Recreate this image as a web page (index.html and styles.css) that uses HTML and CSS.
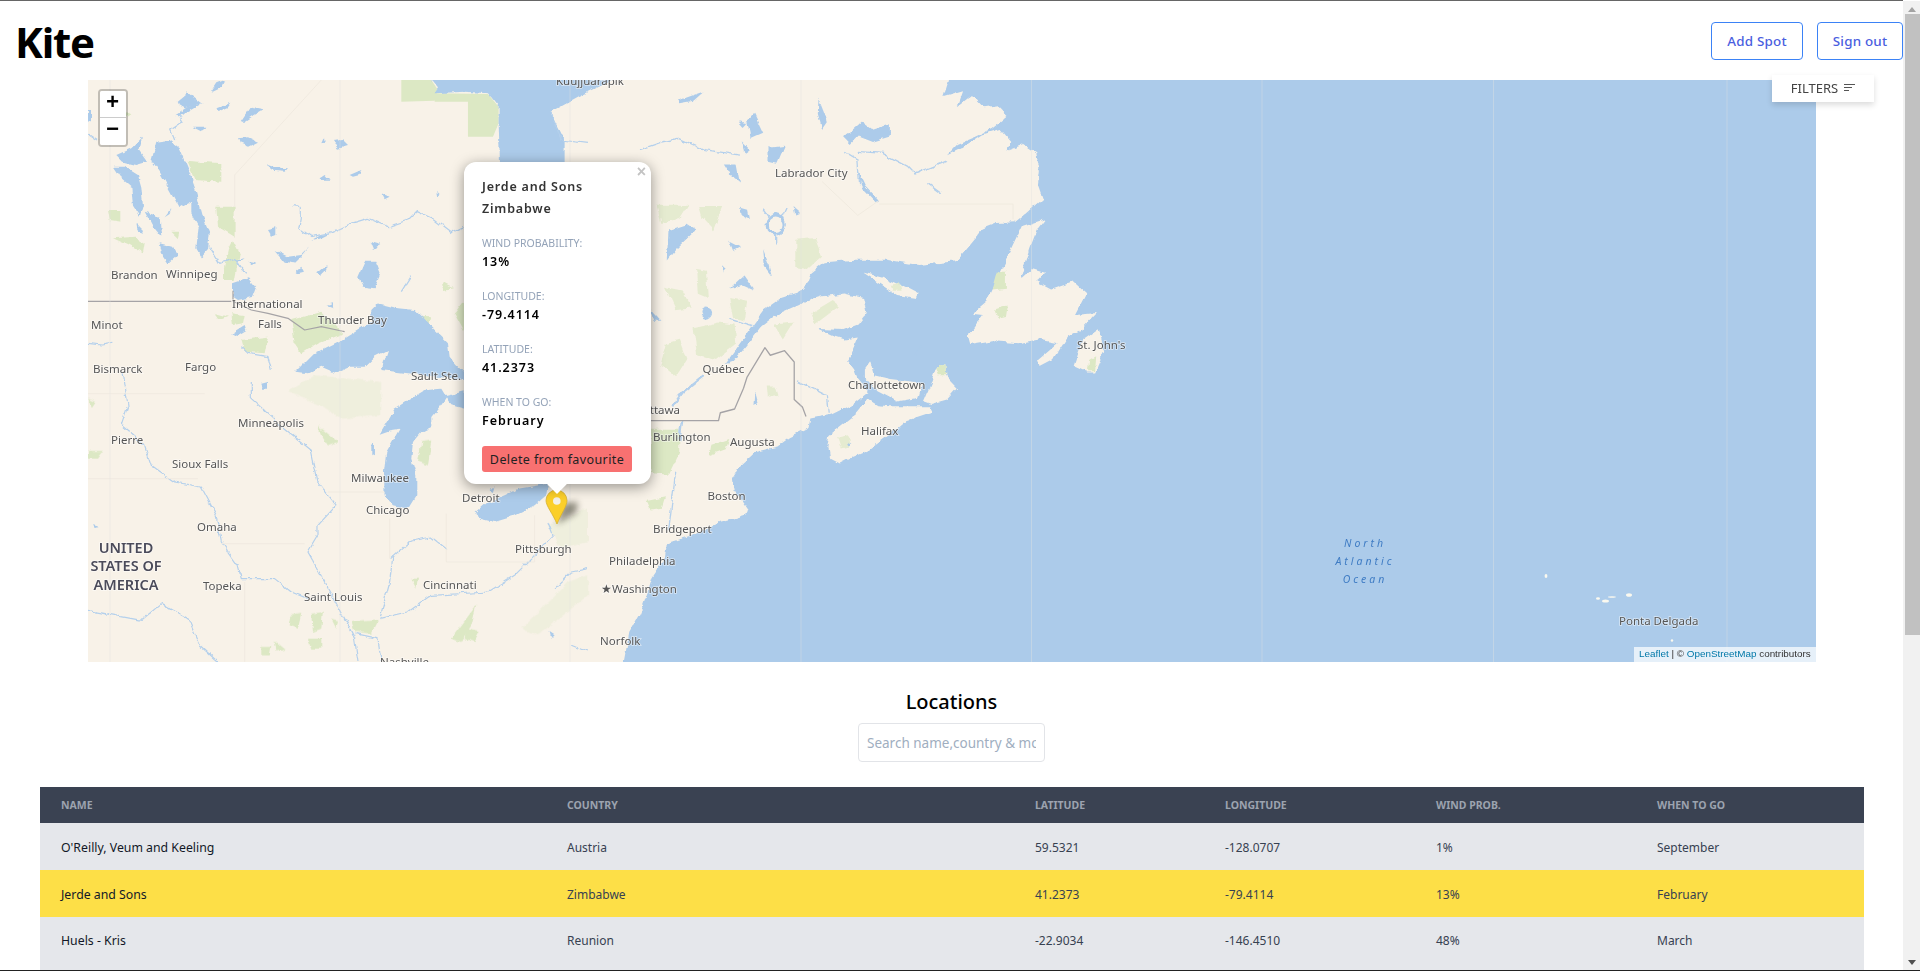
FILE: index.html
```html
<!DOCTYPE html>
<html lang="en">
<head>
<meta charset="utf-8">
<title>Kite</title>
<link rel="stylesheet" href="styles.css">
</head>
<body>
<div class="page">
  <header class="topbar">
    <h1 class="logo">Kite</h1>
    <div class="actions">
      <button class="btn-outline">Add Spot</button>
      <button class="btn-outline">Sign out</button>
    </div>
  </header>

  <section class="map">
    <svg class="tiles" viewBox="88 80 1728 582" width="1728" height="582">
      <defs>
        <filter id="coast" x="-3%" y="-3%" width="106%" height="106%" color-interpolation-filters="sRGB">
          <feTurbulence type="fractalNoise" baseFrequency=".035" numOctaves="4" seed="7"/>
          <feDisplacementMap in="SourceGraphic" scale="16" xChannelSelector="R" yChannelSelector="G"/>
        </filter>
      </defs>
      <rect class="water" x="88" y="80" width="1728" height="582"/>
      <!-- east: land traced from the reference -->
      <g transform="translate(640,80) scale(.357,.376)">
        <g filter="url(#coast)">
          <path class="land" d="M875,-60 865,0 850,45 905,30 890,70 930,40 965,75 1000,70 1028,97 985,130 940,150 890,170 860,200 900,182 960,145 1010,130 1040,165 1025,190 1075,172 1110,195 1120,240 1115,280 1128,315 1080,355 1050,378 1000,380 960,395 930,430 885,482 780,492 690,478 600,478 520,485 480,515 462,558 460,590 510,575 570,568 625,580 635,620 610,650 570,665 500,662 540,680 575,690 610,685 590,730 580,745 600,770 610,795 640,830 600,860 535,890 480,900 475,925 420,950 385,975 320,990 285,1020 260,1060 265,1090 290,1125 305,1145 300,1155 265,1165 225,1175 140,1215 75,1235 70,1270 35,1320 15,1380 0,1420 -30,1470 -45,1547 -60,1620 -1700,1620 -1700,-60Z"/>
          <path class="land" d="M525,975 530,945 570,915 610,885 640,850 665,865 700,868 810,868 820,885 740,910 690,950 640,985 590,1005 560,1020 530,1005Z"/>
          <path class="land" d="M795,855 815,810 830,765 855,750 858,790 888,820 860,850 815,862Z"/>
          <path class="land" d="M630,770 645,750 655,785 700,795 790,805 780,845 720,855 660,825 630,790Z"/>
          <path class="land" d="M625,512 680,525 740,550 780,570 775,580 720,572 670,540Z"/>
          <path class="land" d="M918,680 960,625 930,622 970,590 1000,530 1040,450 1070,390 1135,370 1110,400 1090,450 1065,530 1100,500 1135,510 1110,535 1150,555 1210,535 1250,570 1220,625 1280,620 1240,660 1200,680 1160,740 1120,760 1115,745 1170,700 1115,690 1060,700 990,695 925,705Z"/>
          <path class="land" d="M1215,760 1240,690 1285,660 1300,720 1275,775 1250,775Z"/>
          <path class="water" d="M460,560 395,580 350,610 315,655 270,715 240,755 262,748 300,705 340,655 380,625 450,595 480,570Z"/>
          <path class="water" d="M765,730 785,705 798,700 780,715 772,732Z"/>
        </g>
        <g class="green pale" filter="url(#coast)">
          <path d="M45,332 135,332 110,370 60,380Z"/><path d="M165,335 230,335 205,400 175,370Z"/>
          <path d="M435,425 490,420 510,470 470,505 435,500Z"/><path d="M70,550 120,560 145,605 100,610Z"/>
          <path d="M150,660 220,645 265,650 270,700 210,745 160,730Z"/><path d="M75,700 110,690 130,745 100,790 60,760Z"/>
          <path d="M355,815 380,815 388,840 358,845Z"/>
          <path d="M160,505 185,510 190,580 165,570Z"/><path d="M250,580 300,590 290,640 260,630Z"/>
          <path d="M480,620 540,585 560,600 490,650Z"/><path d="M375,650 430,645 400,690Z"/>
          <path d="M555,950 585,945 590,975 565,980Z"/><path d="M700,545 725,540 730,558 705,558Z"/>
        </g>
        <g class="green" filter="url(#coast)">
          <path d="M30,930 110,930 110,990 80,1050 30,1045Z"/>
          <path d="M200,970 250,955 240,985 195,1000Z"/><path d="M1000,510 1025,510 1025,555 985,560Z"/>
          <path d="M995,610 1030,600 1025,630 1005,635Z"/><path d="M18,1120 70,1110 60,1140 30,1145Z"/>
          <path d="M1258,745 1275,735 1272,772 1255,772Z"/><path d="M830,765 855,750 858,785 838,785Z"/>
        </g>
        <g class="lake" filter="url(#coast)">
          <path d="M105,55 180,30 150,55 110,62Z"/><path d="M235,225 270,225 280,275 255,255Z"/>
          <path d="M280,340 300,345 305,370 285,360Z"/><path d="M430,335 448,350 435,355Z"/>
          <path d="M570,150 620,110 650,130 700,115 700,150 650,165 610,150 590,170Z"/>
          <path d="M80,400 130,385 155,400 100,450 75,480Z"/><path d="M610,240 630,280 670,320 660,325 620,285Z"/>
          <path d="M500,50 525,110 510,130 498,90Z"/><path d="M300,110 320,90 345,140 310,155Z"/>
          <path d="M360,180 405,175 385,220 360,215Z"/><path d="M30,610 60,640 40,640Z"/>
          <circle cx="187" cy="620" r="15"/><path d="M345,450 360,490 370,525 350,500Z"/>
          <path d="M250,555 290,520 320,560 285,545Z"/><path d="M230,490 240,500 232,510Z"/>
          <path d="M250,430 280,445 260,455Z"/><path d="M285,160 310,185 295,195Z"/>
          <path d="M275,110 300,115 290,125Z"/><path d="M320,825 330,860 318,865Z"/>
          <path d="M580,965 592,970 585,975Z"/>
        </g>
        <g class="river" filter="url(#coast)">
          <circle class="ring" cx="380" cy="385" r="24"/>
          <path d="M380,410 380,440M360,365 345,345M400,365 412,340"/>
          <path d="M610,190 680,195 750,230 770,250 860,215M0,185 60,165 110,155 180,185 280,200"/>
          <path d="M250,635 320,655M440,800 525,840 530,885M100,1040 80,1200M805,275 845,303"/>
          <path class="wide" d="M180,785 120,830 90,870M118,905 110,960"/>
          <path d="M575,190 610,210 615,280"/>
        </g>
        <path class="border" d="M30,906 220,906 225,885 265,875 290,820 300,790 350,712 365,732 405,720 432,750 432,850 455,870 465,895"/>
        <path class="dash" d="M670,330H1045V370M510,270 610,360 670,320"/>
      </g>
      <!-- north-west -->
      <g transform="translate(88,80) scale(.3333)">
        <g class="green" filter="url(#coast)">
          <path d="M295,242 400,250 400,305 320,300Z"/><path d="M385,380 440,380 440,470 390,440Z"/>
          <path d="M435,480 455,520 440,600 408,600 408,565 420,510Z"/><path d="M75,475 140,470 170,490 165,520 120,495Z"/>
          <path d="M60,390 100,390 100,425 65,420Z"/><path d="M610,720 700,695 770,760 690,790 640,820 620,790Z"/>
          <path d="M985,710 1030,712 1020,750 1000,750Z"/><path d="M110,90 130,100 115,110Z"/>
          <path d="M1100,700 1128,660 1128,750Z"/><path d="M430,700 470,705 465,730 435,735Z"/>
          <path d="M460,780 540,770 530,820 470,815Z"/><path d="M1065,610 1095,625 1068,630Z"/>
          <path d="M250,455 275,455 270,475Z"/><path d="M380,700 420,710 395,720Z"/>
        </g>
        <g class="green">
          <path d="M940,0 1030,0 1050,30 1040,62 940,65Z"/><path d="M1040,40 1200,42 1232,80 1232,130 1215,170 1140,170 1140,65 1040,65Z"/>
        </g>
        <path class="dash" d="M440,285 700,0M440,285V380"/>
        <g class="lake" filter="url(#coast)">
          <path d="M1015,-50 1030,0 1050,25 1040,40 1130,35 1200,40 1232,80 1232,130 1238,300 1430,300 1430,180 1415,150 1395,110 1388,95 1470,50 1572,0 1600,-50Z"/>
          <path d="M190,240 205,185 245,180 275,205 300,265 325,335 345,410 365,460 360,510 340,532 325,505 332,440 310,400 310,365 275,385 245,330 215,275Z"/>
          <path d="M75,260 110,260 150,285 160,320 165,375 155,410 135,380 130,320 95,290Z"/>
          <path d="M85,225 130,205 165,170 155,210 180,245 145,255 105,245Z"/>
          <path d="M215,490 255,500 270,525 240,552 225,530Z"/><path d="M170,395 215,410 220,470 195,440Z"/>
          <path d="M145,430 165,450 160,462 148,450Z"/><path d="M230,415 250,390 245,405Z"/>
          <path d="M265,70 300,40 340,70 290,85Z"/><path d="M260,105 300,80 345,68 300,95 265,110Z"/>
          <path d="M385,85 430,68 420,82 395,93Z"/><path d="M460,125 490,80 530,88 500,105 470,125Z"/>
          <path d="M368,35 400,20 410,0 385,10Z"/><path d="M315,140 355,140 345,155Z"/>
          <path d="M450,175 480,172 510,185 480,200 455,190Z"/><path d="M735,183 765,180 780,195 750,203Z"/>
          <path d="M530,252 560,262 600,265 590,275 555,272Z"/><path d="M695,295 710,285 725,302 700,302Z"/>
          <path d="M785,285 820,270 815,285 795,290Z"/><path d="M880,340 905,350 890,358Z"/>
          <path d="M1045,335 1055,345 1048,350Z"/><path d="M540,450 565,445 565,465 552,470Z"/>
          <path d="M560,510 600,530 640,525 665,500 640,530 620,550 590,545Z"/>
          <path d="M685,580 715,555 715,570 695,590Z"/><path d="M620,578 640,560 648,575 630,580Z"/>
          <path d="M810,590 830,545 865,545 878,580 860,625 825,620Z"/>
          <path d="M435,610 480,595 505,625 495,650 450,660 435,650Z"/>
          <path d="M430,760 470,735 475,750 445,768Z"/><path d="M670,480 700,465 730,460 700,475Z"/>
          <path d="M845,485 880,495 855,510Z"/><path d="M700,190 708,172 710,188Z"/>
          <path d="M0,90 12,90 12,120 0,125Z"/><path d="M715,675 735,670 735,682Z"/>
          <path d="M445,540 470,535 455,545Z"/><path d="M480,545 505,550 490,555Z"/>
          <path d="M625,875 680,820 760,780 850,725 850,690 870,670 930,685 980,690 1050,760 1080,790 1085,830 1105,855 1130,880 1130,900 1090,895 960,880 880,870 900,810 860,830 830,860 790,860 745,880 700,860 660,880Z"/>
        </g>
        <g class="river" filter="url(#coast)">
          <path d="M615,377 640,380 640,415 635,445 670,470 730,458 790,430 840,415 900,440 960,420 985,395 1040,420 1090,458 1128,440"/>
          <path d="M940,635 968,590M365,500 395,550 440,535 470,580M1388,95 1420,180 1500,190"/>
          <path d="M260,180 248,150 285,125 270,100M0,160 30,180M0,790 40,795 70,790"/>
          <path d="M460,800 480,820 540,830 550,870"/>
        </g>
        <path class="border" d="M0,664H430M435,632V664L490,690 540,700 600,715 650,750 700,740 770,755"/>
      </g>
      <!-- south-west -->
      <g transform="translate(88,362) scale(.3333)">
        <g class="green" filter="url(#coast)">
          <path class="faint" d="M600,90 680,40 880,60 880,160 760,170 700,130Z"/>
          <path d="M690,190 750,240 720,250 700,220Z"/><path d="M1000,240 1030,235 1020,310 990,300Z"/>
          <path d="M0,270 45,270 30,290 0,290Z"/><path d="M0,110 25,120 15,135Z"/>
          <path d="M610,760 640,755 630,800 605,790Z"/><path d="M670,755 705,750 700,800 675,810Z"/>
          <path d="M730,770 750,775 745,800Z"/><path d="M660,830 700,830 700,860 670,860Z"/>
          <path d="M560,835 590,860 565,865Z"/><path d="M520,855 550,855 545,880 520,880Z"/>
          <path d="M1090,830 1150,750 1165,730 1150,790 1120,840Z"/><path d="M1135,800 1175,810 1160,840 1130,830Z"/>
          <path class="faint" d="M1300,800 1440,660 1500,640 1500,700 1350,820Z"/>
          <path d="M790,780 870,775 850,815 800,810Z"/><path d="M970,650 990,650 985,680Z"/>
          <path class="faint" d="M1380,490 1500,440 1500,540 1420,560Z"/>
        </g>
        <g class="lake" filter="url(#coast)">
          <path d="M875,215 920,140 960,115 1010,85 1060,80 1075,105 1050,140 1030,165 1030,195 1000,210 975,240 970,290 985,340 985,400 960,440 915,430 890,400 888,330 895,270 935,200 905,205Z"/>
          <path d="M1070,100 1130,85 1130,140 1090,130Z"/>
          <path d="M1160,455 1200,420 1250,400 1290,380 1380,365 1375,400 1340,430 1270,465 1220,480 1180,470Z"/>
          <path d="M1205,385 1220,370 1215,390Z"/><path d="M520,65 540,60 540,80 525,80Z"/>
          <path d="M850,250 858,245 858,275 850,280Z"/><path d="M15,490 40,495 20,498Z"/>
          <path d="M1385,810 1400,820 1390,830Z"/>
        </g>
        <g class="river" filter="url(#coast)">
          <path d="M105,30 120,130 100,190 170,250 190,310 260,360 340,375 385,460 400,540 450,610 460,650 560,650 610,690 660,710"/>
          <path d="M490,60 490,110 590,200 670,265 690,360 745,430 690,490 690,520 660,570 710,660 770,770 800,830 810,900"/>
          <path d="M875,770 960,750 1030,700 1200,690 1280,640 1330,590 1395,520 1380,480M905,590 960,540 1030,525 1080,565"/>
          <path d="M915,580 905,660 875,770M0,745 160,775 220,725 300,770 335,850 390,900M800,815 870,830 880,900"/>
          <path d="M1400,680 1450,630 1500,620M1450,850 1500,870"/>
        </g>
        <path class="dash" d="M0,95H350M0,350H330M400,545H650M470,660V900M720,390H890M1075,455V600H1340V460M905,470V590"/>
      </g>
      <!-- Azores -->
      <g class="isle">
        <ellipse cx="1546" cy="576" rx="1.4" ry="2"/><ellipse cx="1598" cy="598.500" rx="2" ry="1.300"/>
        <ellipse cx="1605.500" cy="601" rx="3.500" ry="1.600"/><ellipse cx="1629" cy="595" rx="3" ry="1.800"/>
        <ellipse cx="1612" cy="597" rx="4" ry=".8"/><circle cx="1672" cy="640.500" r="1.200"/>
      </g>
      <!-- tile seams -->
      <path class="seam" d="M110,80V662M340,80V662M570,80V662M801,80V662M1031.500,80V662M1262,80V662M1493.500,80V662M1727,80V662"/>
      <g class="place">
        <text x="556" y="85">Kuujjuarapik</text>
        <text x="111" y="279">Brandon</text><text x="166" y="278">Winnipeg</text>
        <text x="232" y="308">International</text><text x="258" y="328">Falls</text>
        <text x="318" y="324">Thunder Bay</text><text x="91" y="329">Minot</text>
        <text x="93" y="373">Bismarck</text><text x="185" y="371">Fargo</text>
        <text x="411" y="380">Sault Ste.</text><text x="238" y="427">Minneapolis</text>
        <text x="111" y="444">Pierre</text><text x="172" y="468">Sioux Falls</text>
        <text x="351" y="482">Milwaukee</text><text x="366" y="514">Chicago</text>
        <text x="462" y="502">Detroit</text><text x="197" y="531">Omaha</text>
        <text x="515" y="553">Pittsburgh</text><text x="423" y="589">Cincinnati</text>
        <text x="203" y="590">Topeka</text><text x="304" y="601">Saint Louis</text>
        <text x="380" y="666">Nashville</text>
        <text x="775" y="177">Labrador City</text><text x="702.500" y="372.500">Québec</text>
        <text x="680" y="414" text-anchor="end">Ottawa</text><text x="653" y="441">Burlington</text>
        <text x="730" y="446">Augusta</text><text x="848" y="389">Charlottetown</text>
        <text x="861" y="435">Halifax</text><text x="1077" y="349">St. John's</text>
        <text x="707.500" y="500">Boston</text><text x="653" y="533">Bridgeport</text>
        <text x="609" y="565">Philadelphia</text><text x="601" y="593">★Washington</text>
        <text x="600" y="645">Norfolk</text><text x="1619" y="625">Ponta Delgada</text>
      </g>
      <g class="country">
        <text x="126" y="553">UNITED</text><text x="126" y="571">STATES OF</text><text x="126" y="590">AMERICA</text>
      </g>
      <g class="ocean">
        <text x="1365" y="547">North</text><text x="1365" y="565">Atlantic</text><text x="1365" y="583">Ocean</text>
      </g>
      <!-- marker -->
      <path class="marker-shadow" d="M557,524 563,503 578,502 576,513Z"/>
      <path class="marker" d="M557,524 C553,514 546,506 546,500.500 A10.500,10.500 0 0 1 567,500.500 C567,506 561,514 557,524Z"/>
      <circle class="marker-hole" cx="556.800" cy="501" r="3.800"/>
    </svg>

    <div class="zoom">
      <a class="zoom-btn">+</a>
      <a class="zoom-btn">−</a>
    </div>

    <button class="filters">FILTERS
      <svg class="filters-icon" width="11" height="7" viewBox="0 0 11 7"><path d="M0,.5H11M0,3.500H8M0,6.500H5"/></svg>
    </button>

    <div class="attribution"><a>Leaflet</a> | © <a>OpenStreetMap</a> contributors</div>

    <div class="popup">
      <span class="popup-close">×</span>
      <div class="popup-title">Jerde and Sons</div>
      <div class="popup-title">Zimbabwe</div>
      <div class="field"><div class="field-label">WIND PROBABILITY:</div><div class="field-value">13%</div></div>
      <div class="field"><div class="field-label">LONGITUDE:</div><div class="field-value">-79.4114</div></div>
      <div class="field"><div class="field-label">LATITUDE:</div><div class="field-value">41.2373</div></div>
      <div class="field"><div class="field-label">WHEN TO GO:</div><div class="field-value">February</div></div>
      <button class="btn-delete">Delete from favourite</button>
    </div>
  </section>

  <section class="locations">
    <h2 class="locations-title">Locations</h2>
    <input class="search" type="text" placeholder="Search name,country &amp; month">
  </section>

  <table class="spots">
    <colgroup>
      <col class="c-name"><col class="c-country"><col class="c-lat"><col class="c-long"><col class="c-wind"><col class="c-when">
    </colgroup>
    <thead>
      <tr><th>Name</th><th>Country</th><th>Latitude</th><th>Longitude</th><th>Wind prob.</th><th>When to go</th></tr>
    </thead>
    <tbody>
      <tr><td class="strong">O'Reilly, Veum and Keeling</td><td>Austria</td><td>59.5321</td><td>-128.0707</td><td>1%</td><td>September</td></tr>
      <tr class="fav"><td class="strong">Jerde and Sons</td><td>Zimbabwe</td><td>41.2373</td><td>-79.4114</td><td>13%</td><td>February</td></tr>
      <tr class="last"><td class="strong">Huels - Kris</td><td>Reunion</td><td>-22.9034</td><td>-146.4510</td><td>48%</td><td>March</td></tr>
    </tbody>
  </table>
</div>

<div class="scrollbar">
  <span class="sb-up"></span>
  <span class="sb-thumb"></span>
  <span class="sb-down"></span>
</div>
<div class="window-edge"></div>
</body>
</html>
```

FILE: styles.css
```css
html, body {
  margin: 0;
  height: 100%;
  overflow: hidden;
  background: #fff;
}
* { box-sizing: border-box; }
body {
  font-family: "Noto Sans", "Liberation Sans", sans-serif;
  color: #111;
}
.page {
  width: 1903px;
  height: 971px;
  overflow: hidden;
  border-top: 1px solid #666;
}

/* top bar */
.topbar {
  display: flex;
  justify-content: space-between;
  height: 79px;
  padding-left: 15px;
}
.logo {
  margin: 9px 0 0;
  font-size: 42px;
  line-height: 64px;
  font-weight: 700;
  letter-spacing: -1.2px;
  color: #000;
}
.actions {
  display: flex;
  gap: 14px;
  padding-top: 21px;
}
.btn-outline {
  height: 38px;
  padding: 0;
  border: 1px solid #3b82f6;
  border-radius: 4px;
  background: #fff;
  color: #4a5ee0;
  font: 500 13.400px "Noto Sans", sans-serif;
  letter-spacing: .2px;
}
.actions .btn-outline:first-child { width: 92px; }
.actions .btn-outline:last-child { width: 86px; }

/* map */
.map {
  position: relative;
  width: 1728px;
  height: 582px;
  margin-left: 88px;
}
.tiles { display: block; filter: blur(.3px); }
.water { fill: #accbea; }
.land { fill: #f8f2e8; }
.green path { fill: #dce8c4; }
.green path.faint { opacity: .3; }
.green.pale { opacity: .65; }
.lake path, .lake circle { fill: #accbea; }
.river path { fill: none; stroke: #b4d0ec; stroke-width: 3.6; stroke-linejoin: round; }
.river path.wide { stroke-width: 7; }
.river .ring { fill: none; stroke: #accbea; stroke-width: 9; }
.border { fill: none; stroke: #a5a3a6; stroke-width: 3.6; stroke-linejoin: round; }
.dash { fill: none; stroke: #efe9de; stroke-width: 2.4; }
.seam { fill: none; stroke: #e4e4e0; stroke-opacity: .4; stroke-width: 1; }
.isle { fill: #fbf9ef; }
.place text {
  font: 11.500px "Noto Sans", sans-serif;
  fill: #555;
  stroke: rgba(255, 255, 255, .55);
  stroke-width: 1.6px;
  paint-order: stroke;
}
.country text {
  font: 600 14.500px "Noto Sans", sans-serif;
  fill: #4b4b5a;
  stroke: rgba(255, 255, 255, .55);
  stroke-width: 1.6px;
  paint-order: stroke;
  text-anchor: middle;
}
.ocean text {
  font: italic 10.500px "Noto Sans", sans-serif;
  letter-spacing: 3px;
  fill: #3f7cc4;
  text-anchor: middle;
}
.marker { fill: #fbcf2a; stroke: #d6b030; stroke-width: .8; }
.marker-hole { fill: #f4f1e8; }
.marker-shadow { fill: #3c3c2c; opacity: .55; filter: blur(3px); }

/* leaflet controls */
.zoom {
  position: absolute;
  left: 9.500px;
  top: 9px;
  width: 30px;
  border: 2px solid rgba(0, 0, 0, .22);
  border-radius: 4px;
  background-clip: padding-box;
}
.zoom-btn {
  display: block;
  width: 26px;
  height: 27px;
  background: #fff;
  color: #000;
  text-align: center;
  font: 700 22px/26px "Liberation Mono", monospace;
}
.zoom-btn:first-child { border-bottom: 1px solid #ccc; border-radius: 2px 2px 0 0; }
.zoom-btn:last-child { border-radius: 0 0 2px 2px; }

.filters {
  position: absolute;
  top: -5px;
  right: -58px;
  display: flex;
  align-items: center;
  justify-content: center;
  gap: 6px;
  width: 102px;
  height: 27px;
  padding: 0 0 2px;
  border: 0;
  background: #fff;
  color: #444;
  font: 400 13px "Noto Sans", sans-serif;
  box-shadow: 0 3px 6px rgba(0, 0, 0, .14);
}
.filters-icon path { fill: none; stroke: #555; stroke-width: 1; }

.attribution {
  position: absolute;
  right: 0;
  bottom: 0;
  width: 182px;
  height: 15px;
  padding-left: 5px;
  background: rgba(255, 255, 255, .7);
  color: #333;
  font: 9.900px/14px "Liberation Sans", sans-serif;
  white-space: nowrap;
}
.attribution a { color: #0078a8; }

/* popup */
.popup {
  position: absolute;
  left: 376px;
  top: 82px;
  width: 187px;
  height: 322px;
  padding: 14px 18px 12px;
  border-radius: 12px;
  background: #fff;
  box-shadow: 0 3px 14px rgba(0, 0, 0, .4);
}
.popup::after {
  content: "";
  position: absolute;
  left: 86px;
  top: 315px;
  width: 14px;
  height: 14px;
  background: #fff;
  transform: rotate(45deg);
}
.popup-close {
  position: absolute;
  top: 3px;
  right: 5px;
  color: #c3c3c3;
  font: 700 16px/14px "Liberation Sans", sans-serif;
}
.popup-title {
  font-size: 12.500px;
  line-height: 22px;
  font-weight: 600;
  letter-spacing: .8px;
  color: #333;
  white-space: nowrap;
}
.field { margin-top: 15px; }
.popup-title + .field { margin-top: 14px; }
.field-label {
  font-size: 10.500px;
  line-height: 18px;
  color: #94a3b8;
  white-space: nowrap;
}
.field-value {
  font-size: 12.500px;
  line-height: 20px;
  font-weight: 600;
  letter-spacing: .95px;
  color: #000;
}
.btn-delete {
  position: relative;
  z-index: 1;
  display: block;
  width: 150px;
  height: 26px;
  margin-top: 15px;
  padding: 0;
  border: 0;
  border-radius: 3px;
  background: #f87171;
  color: #222;
  font: 400 12.500px "Noto Sans", sans-serif;
  letter-spacing: .4px;
  white-space: nowrap;
}

/* locations */
.locations {
  display: flex;
  flex-direction: column;
  align-items: center;
  height: 125px;
  padding-top: 25px;
}
.locations-title {
  margin: 0;
  height: 36px;
  font-size: 20px;
  line-height: 30px;
  font-weight: 500;
  color: #000;
}
.search {
  width: 187px;
  height: 39px;
  padding: 0 8px;
  border: 1px solid #e2e4e8;
  border-radius: 4px;
  background: #fff;
  font: 13.500px "Noto Sans", sans-serif;
  outline: none;
}
.search::placeholder { color: #a0aec0; opacity: 1; }

/* table */
.spots {
  width: 1824px;
  margin-left: 40px;
  border-collapse: collapse;
  table-layout: fixed;
  font-size: 12px;
}
.c-name { width: 506px; }
.c-country { width: 468px; }
.c-lat { width: 190px; }
.c-long { width: 211px; }
.c-wind { width: 221px; }
.c-when { width: 228px; }
.spots th {
  height: 36px;
  padding: 0 21px;
  background: #3a4252;
  color: #9ca3af;
  font-size: 10.500px;
  font-weight: 700;
  text-align: left;
  text-transform: uppercase;
}
.spots td {
  height: 47px;
  padding: 1px 21px 0;
  background: #e5e7eb;
  color: #374151;
}
.spots td.strong { color: #111827; font-size: 12.300px; }
.spots .fav td { background: #fddf47; }
.spots .last td { height: 60px; padding-bottom: 14px; }

/* window chrome */
.scrollbar {
  position: fixed;
  top: 1px;
  right: 0;
  bottom: 1px;
  display: flex;
  flex-direction: column;
  align-items: center;
  width: 17px;
  background: #f1f1f1;
}
.sb-up {
  width: 0;
  height: 0;
  margin-top: 6px;
  border: 4px solid transparent;
  border-top: 0;
  border-bottom: 5px solid #a3a3a3;
}
.sb-thumb {
  width: 15px;
  height: 621px;
  margin-top: 2px;
  margin-left: 2px;
  background: #c1c1c1;
}
.sb-down {
  width: 0;
  height: 0;
  margin-top: auto;
  margin-bottom: 5px;
  border: 4px solid transparent;
  border-bottom: 0;
  border-top: 5px solid #505050;
}
.window-edge {
  position: fixed;
  left: 0;
  right: 0;
  bottom: 0;
  height: 1px;
  background: #222;
}
```
